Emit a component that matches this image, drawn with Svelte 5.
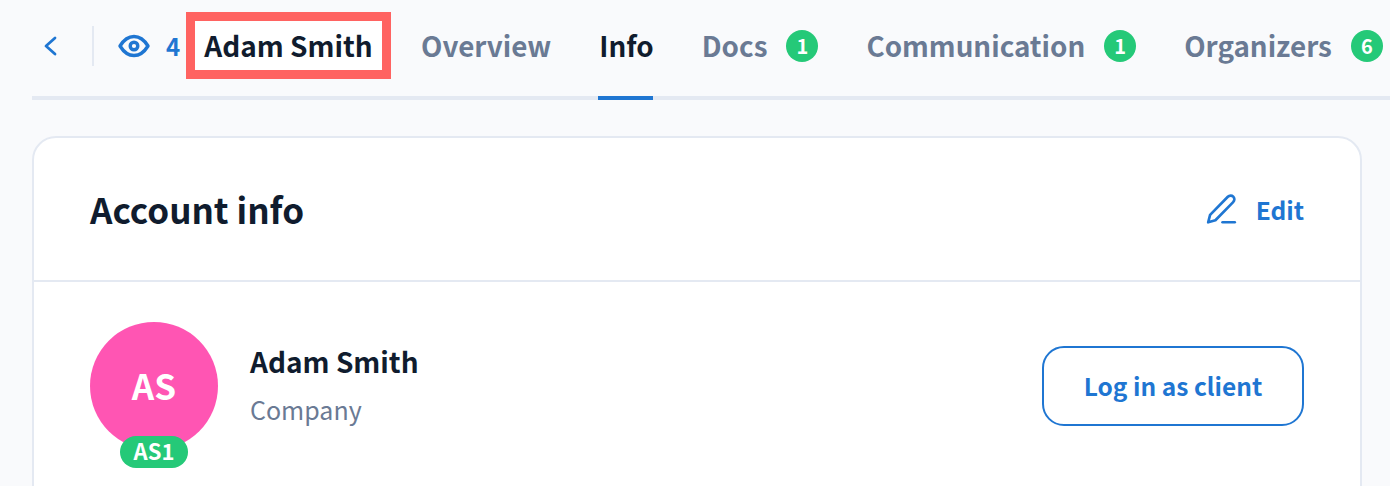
<script>
  const tabs = [
    { label: "Overview" },
    { label: "Info", active: true },
    { label: "Docs", count: 1 },
    { label: "Communication", count: 1 },
    { label: "Organizers", count: 6 },
  ];
</script>

<div class="page">
  <nav class="bar">
    <button class="back" aria-label="Back">
      <svg width="14" height="22" viewBox="0 0 14 22" fill="none">
        <path d="M12 3 L3 11 L12 19" stroke="#1f76d2" stroke-width="2.8" stroke-linecap="round" stroke-linejoin="round" />
      </svg>
    </button>
    <span class="divider"></span>
    <span class="views">
      <svg width="32" height="24" viewBox="0 0 32 24" fill="none">
        <path d="M2 12 C6 5.5 10.5 2.5 16 2.5 C21.5 2.5 26 5.5 30 12 C26 18.5 21.5 21.5 16 21.5 C10.5 21.5 6 18.5 2 12 Z" stroke="#1f76d2" stroke-width="3.4" stroke-linejoin="round" />
        <circle cx="16" cy="12" r="3.8" stroke="#1f76d2" stroke-width="3.4" />
      </svg>
      <span>4</span>
    </span>
    <span class="name">Adam Smith</span>
    {#each tabs as tab}
      <span class="tab" class:active={tab.active}>
        <span class="label">{tab.label}</span>
        {#if tab.count}<span class="count">{tab.count}</span>{/if}
      </span>
    {/each}
  </nav>

  <section class="card">
    <header class="card-head">
      <h2>Account info</h2>
      <button class="edit">
        <svg width="34" height="34" viewBox="0 0 32 32" fill="none">
          <path d="M3 28.5 L4.8 21.5 L21.5 4.5 C23 3 25.2 3 26.6 4.4 C28 5.8 28 8 26.5 9.5 L9.8 26.6 Z" stroke="#1f76d2" stroke-width="2.5" stroke-linejoin="round" />
          <path d="M16.5 28.5 H28" stroke="#1f76d2" stroke-width="2.5" stroke-linecap="round" />
        </svg>
        Edit
      </button>
    </header>
    <div class="card-body">
      <div class="avatar">
        AS
        <span class="code">AS1</span>
      </div>
      <div class="who">
        <div class="who-name">Adam Smith</div>
        <div class="who-org">Company</div>
      </div>
      <button class="login">Log in as client</button>
    </div>
  </section>
</div>

<style>
  :global(body) {
    background: #f9fafc;
    overflow: hidden;
  }
  .page {
    width: 1390px;
    height: 486px;
    overflow: hidden;
    padding-left: 32px;
    box-sizing: border-box;
    font-family: "Noto Sans CJK JP", "Noto Sans", sans-serif;
  }
  button {
    font: inherit;
    background: none;
    border: none;
    padding: 0;
    color: inherit;
  }
  .bar {
    display: flex;
    align-items: center;
    height: 100px;
    margin-right: -200px;
    padding-top: 12px;
    padding-bottom: 17px;
    box-sizing: border-box;
    border-bottom: 4px solid #e4e9f2;
    font-size: 28px;
    font-weight: 600;
    white-space: nowrap;
    position: relative;
  }
  .back {
    display: flex;
    width: 14px;
    margin-left: 11px;
  }
  .divider {
    width: 2px;
    height: 40px;
    background: #e4e9f2;
    margin-left: 35px;
    margin-right: 24px;
  }
  .views {
    display: flex;
    align-items: center;
    gap: 16px;
    color: #1f76d2;
    font-size: 24px;
    font-weight: 700;
    width: 68px;
  }
  .name {
    box-sizing: border-box;
    width: 205px;
    height: 67px;
    display: flex;
    align-items: center;
    justify-content: center;
    margin-right: 30px;
    padding-bottom: 2px;
    border: 9px solid #ff6361;
    background: #fff;
    color: #101c2e;
  }
  .tab {
    display: flex;
    align-items: center;
    gap: 18px;
    color: #6a7a94;
    font-size: 27.8px;
    margin-right: 48px;
    position: relative;
  }
  .label {
    margin-bottom: 2px;
  }
  .tab.active {
    color: #101c2e;
  }
  .tab.active::after {
    content: "";
    position: absolute;
    left: -1px;
    right: 1px;
    bottom: -33px;
    height: 4px;
    background: #1f76d2;
  }
  .count {
    width: 32px;
    height: 32px;
    margin-left: 1px;
    border-radius: 50%;
    background: #25c978;
    color: #fff;
    font-size: 20px;
    font-weight: 700;
    display: flex;
    align-items: center;
    justify-content: center;
  }
  .card {
    width: 1330px;
    box-sizing: border-box;
    margin-top: 36px;
    height: 400px;
    background: #fff;
    border: 2px solid #e4e9f2;
    border-radius: 24px;
  }
  .card-head {
    height: 144px;
    box-sizing: border-box;
    padding: 0 56px;
    border-bottom: 2px solid #e4e9f2;
    display: flex;
    align-items: center;
    justify-content: space-between;
  }
  h2 {
    margin: 0 0 2px;
    font-size: 35px;
    font-weight: 600;
    color: #101c2e;
  }
  .edit {
    display: flex;
    align-items: center;
    gap: 17px;
    color: #1f76d2;
    font-size: 24.5px;
    font-weight: 600;
  }
  .card-body {
    display: flex;
    align-items: flex-start;
    padding: 40px 56px 0;
  }
  .avatar {
    width: 128px;
    height: 128px;
    box-sizing: border-box;
    padding-bottom: 4px;
    border-radius: 50%;
    background: #ff55b3;
    color: #fff;
    font-size: 35px;
    font-weight: 700;
    display: flex;
    align-items: center;
    justify-content: center;
    position: relative;
  }
  .code {
    position: absolute;
    left: 30px;
    top: 114px;
    width: 68px;
    height: 32px;
    box-sizing: border-box;
    padding-bottom: 4px;
    border-radius: 16px;
    background: #25c978;
    font-size: 22px;
    font-weight: 700;
    display: flex;
    align-items: center;
    justify-content: center;
  }
  .who {
    margin-left: 32px;
    margin-top: 17px;
  }
  .who-name {
    font-size: 28px;
    font-weight: 600;
    color: #101c2e;
    line-height: 44px;
  }
  .who-org {
    font-size: 25px;
    color: #6a7a94;
    line-height: 40px;
    margin-top: 6px;
  }
  .login {
    margin-left: auto;
    margin-top: 24px;
    width: 262px;
    height: 80px;
    box-sizing: border-box;
    padding-bottom: 2px;
    border: 2px solid #1f76d2;
    border-radius: 22px;
    color: #1f76d2;
    font-size: 24.5px;
    font-weight: 600;
  }
</style>
